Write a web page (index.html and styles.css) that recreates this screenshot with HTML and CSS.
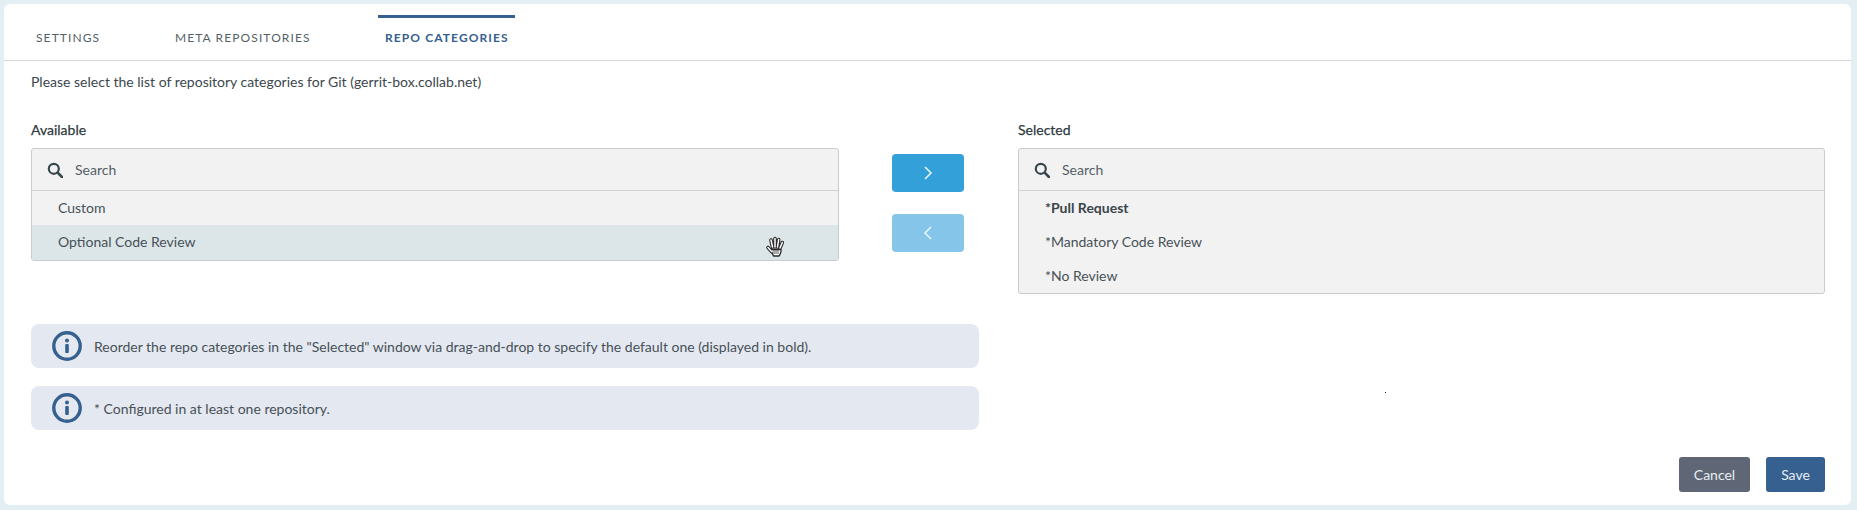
FILE: index.html
```html
<!DOCTYPE html>
<html lang="en">
<head>
  <meta charset="UTF-8" />
  <title>Repo Categories</title>
  <link rel="stylesheet" href="styles.css">
</head>
<body>
  <div class="card">
    <div class="tabs">
      <div class="tab tab-settings">SETTINGS</div>
      <div class="tab tab-meta">META REPOSITORIES</div>
      <div class="tab tab-active">REPO CATEGORIES</div>
    </div>

    <p class="intro">Please select the list of repository categories for Git (gerrit-box.collab.net)</p>

    <div class="picker">
      <div class="col col-left">
        <div class="label">Available</div>
        <div class="listbox">
          <div class="search">
            <svg class="search-icon" viewBox="0 0 16 16"><circle cx="6.8" cy="6.8" r="5" fill="none" stroke="#37474f" stroke-width="2.2"/><path d="M10.6 10.6 15 15" stroke="#37474f" stroke-width="2.6" stroke-linecap="round"/></svg>
            <span>Search</span>
          </div>
          <div class="row">Custom</div>
          <div class="row row-hover">
            Optional Code Review
            <svg class="hand" viewBox="0 0 20 22">
              <path d="M3 12.500l3.500 4M7.500 12L6 5M10 12V3.500M12.500 12l1.200-7.500M15 13l2.300-5.500" fill="none" stroke="#2a2a2a" stroke-width="3.600" stroke-linecap="round"/>
              <path d="M6 14.500h10c.3 2.500-.7 5-2 6.500H8.500C7.500 19 6.500 17 6 14.500z" fill="#fff" stroke="#2a2a2a" stroke-width="1.300" stroke-linejoin="round"/>
              <path d="M3 12.500l3.500 4M7.500 12L6 5M10 12V3.500M12.500 12l1.200-7.500M15 13l2.300-5.500" fill="none" stroke="#fff" stroke-width="1.500" stroke-linecap="round"/>
              <path d="M9 15v4M11 15v4M13 15v4" stroke="#444" stroke-width=".9"/>
            </svg>
          </div>
        </div>
      </div>

      <div class="arrows">
        <button class="arrow"><svg viewBox="0 0 10 16"><path d="M2 2l6 6-6 6" fill="none" stroke="#e6f4fb" stroke-width="1.600"/></svg></button>
        <button class="arrow arrow-off"><svg viewBox="0 0 10 16"><path d="M8 2L2 8l6 6" fill="none" stroke="#e6f4fb" stroke-width="1.600"/></svg></button>
      </div>

      <div class="col col-right">
        <div class="label">Selected</div>
        <div class="listbox">
          <div class="search">
            <svg class="search-icon" viewBox="0 0 16 16"><circle cx="6.8" cy="6.8" r="5" fill="none" stroke="#37474f" stroke-width="2.2"/><path d="M10.6 10.6 15 15" stroke="#37474f" stroke-width="2.6" stroke-linecap="round"/></svg>
            <span>Search</span>
          </div>
          <div class="row row-default">*Pull Request</div>
          <div class="row">*Mandatory Code Review</div>
          <div class="row">*No Review</div>
        </div>
      </div>
    </div>

    <div class="notes">
      <div class="note">
        <svg class="info" viewBox="0 0 30 30"><circle cx="15" cy="15" r="13.200" fill="none" stroke="#35608f" stroke-width="3.400"/><circle cx="15" cy="9.500" r="2" fill="#35608f"/><rect x="13.200" y="13" width="3.600" height="9" rx="1" fill="#35608f"/></svg>
        Reorder the repo categories in the "Selected" window via drag-and-drop to specify the default one (displayed in bold).
      </div>
      <div class="note">
        <svg class="info" viewBox="0 0 30 30"><circle cx="15" cy="15" r="13.200" fill="none" stroke="#35608f" stroke-width="3.400"/><circle cx="15" cy="9.500" r="2" fill="#35608f"/><rect x="13.200" y="13" width="3.600" height="9" rx="1" fill="#35608f"/></svg>
        * Configured in at least one repository.
      </div>
    </div>

    <div class="actions">
      <button class="btn btn-cancel">Cancel</button>
      <button class="btn btn-save">Save</button>
    </div>

    <div class="speck"></div>
  </div>
</body>
</html>
```
FILE: styles.css
```css
* {
  box-sizing: border-box;
}
body {
  margin: 0;
  height: 510px;
  padding: 4px 6px 5px 4px;
  background: #e4eff3;
  font-family: Lato, "Noto Sans", Arial, sans-serif;
  font-size: 14px;
  color: #3c474e;
  overflow: hidden;
}
.card {
  position: relative;
  height: 501px;
  background: #fff;
  border-radius: 6px;
  padding: 0 0 0 27px;
}
.tabs {
  display: flex;
  height: 57px;
  margin-left: -27px;
  border-bottom: 1px solid #d5d9dc;
}
.tab {
  margin-top: 11px;
  padding-top: 12px;
  font-size: 12px;
  letter-spacing: 1.1px;
  white-space: nowrap;
  color: #555f66;
  border-top: 3px solid transparent;
}
.tab-settings {
  margin-left: 32px;
  width: 139px;
}
.tab-meta {
  width: 203px;
}
.tab-active {
  width: 137px;
  padding-left: 7px;
  border-top-color: #35608f;
  color: #35608f;
  font-weight: 700;
}
.intro {
  margin: 11px 0 0;
  height: 19px;
  line-height: 19px;
}
.picker {
  display: flex;
  margin-top: 29px;
}
.col-left {
  width: 808px;
}
.col-right {
  width: 807px;
}
.label {
  height: 28px;
  padding-top: 1px;
  line-height: 18px;
  color: #2f3a40;
  -webkit-text-stroke: 0.25px #2f3a40;
}
.listbox {
  background: #f2f2f2;
  border: 1px solid #c9cccd;
  border-radius: 3px;
  overflow: hidden;
}
.search {
  display: flex;
  align-items: center;
  height: 42px;
  padding-left: 15px;
  border-bottom: 1px solid #d0d3d4;
  color: #555f66;
}
.search-icon {
  width: 16px;
  height: 16px;
  margin-right: 12px;
}
.row {
  position: relative;
  height: 34px;
  line-height: 34px;
  padding-left: 26px;
  color: #475157;
}
.row-hover {
  height: 35px;
  background: #dce6e9;
}
.row-default {
  font-weight: 700;
  color: #3a444a;
}
.hand {
  position: absolute;
  left: 733px;
  top: 10px;
  width: 20px;
  height: 22px;
}
.arrows {
  width: 179px;
  padding: 34px 0 0 53px;
}
.arrow {
  display: flex;
  align-items: center;
  justify-content: center;
  width: 72px;
  height: 38px;
  margin-bottom: 22px;
  background: #34a0d9;
  border: none;
  border-radius: 4px;
}
.arrow-off {
  background: #85c5ea;
}
.arrow svg {
  width: 10px;
  height: 16px;
}
.notes {
  margin-top: 30px;
  width: 948px;
}
.note {
  display: flex;
  align-items: center;
  height: 44px;
  margin-bottom: 18px;
  padding-left: 21px;
  background: #e4e8f1;
  border-radius: 8px;
  color: #475157;
}
.info {
  width: 30px;
  height: 30px;
  margin-right: 12px;
}
.actions {
  display: flex;
  justify-content: flex-end;
  gap: 16px;
  margin-top: 27px;
  padding-right: 26px;
}
.btn {
  height: 35px;
  border: none;
  border-radius: 3px;
  color: #e8edf2;
  font-family: inherit;
  font-size: 14px;
}
.btn-cancel {
  width: 71px;
  background: #5f6776;
}
.btn-save {
  width: 59px;
  background: #35608f;
}
.speck {
  position: absolute;
  left: 1381px;
  top: 388px;
  width: 1px;
  height: 1px;
  background: #222;
}
```
